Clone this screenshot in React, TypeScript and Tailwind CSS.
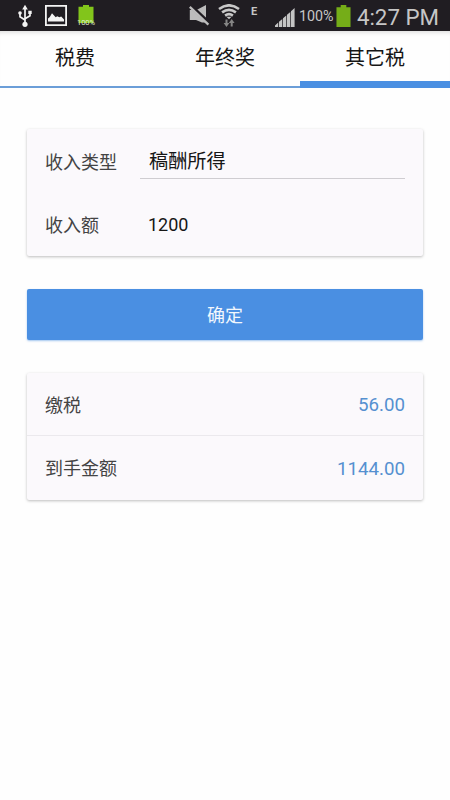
const tabs = ["税费", "年终奖", "其它税"];

const results = [
  { label: "缴税", value: "56.00" },
  { label: "到手金额", value: "1144.00" },
];

const cardClass =
  "rounded-[2px] bg-[#fbf9fc] shadow-[0_1px_3px_rgba(0,0,0,0.26)]";

function UsbIcon() {
  return (
    <svg width="14" height="24" viewBox="0 0 14 24" fill="none" stroke="#f4f4f4" strokeWidth="1.7">
      <path d="M7 4v16M2 9.5v3.3l5 3.2M12 8.5v3.3l-5 3" />
      <path d="M7 .8l2.8 4.6H4.2z" fill="#f4f4f4" stroke="none" />
      <circle cx="7" cy="20.3" r="2.6" fill="#f4f4f4" stroke="none" />
      <circle cx="2" cy="9" r="1.8" fill="#f4f4f4" stroke="none" />
      <path d="M10.3 6.7h3.4v3.4h-3.4z" fill="#f4f4f4" stroke="none" />
    </svg>
  );
}

function PictureIcon() {
  return (
    <svg width="22" height="21" viewBox="0 0 22 21">
      <path d="M.9.9h20.2v19.2H.9z" fill="none" stroke="#f4f4f4" strokeWidth="1.8" />
      <path d="M3 16.5v-3l1.8-1.6L7 8.3l3.7 4 1.5-1 2.2.9 1.8-.8 2.8 3v2.1z" fill="#f4f4f4" />
    </svg>
  );
}

function BatteryIcon({ className, color }: { className: string; color: string }) {
  return (
    <svg className={className} viewBox="0 0 16 22" preserveAspectRatio="none">
      <path d="M5 0h6v2.2h4.5V22H.5V2.2H5z" fill={color} />
    </svg>
  );
}

function MuteIcon() {
  return (
    <svg width="22" height="21" viewBox="0 0 22 21">
      <path d="M.8 5h6.7L17 0v17.5H13L7 15H.8z" fill="#bcbcbc" />
      <path d="M2.5 1.6L20.6 18.6" stroke="#201d22" strokeWidth="4" />
      <path d="M.8 1.8L19.4 19.6" stroke="#bcbcbc" strokeWidth="2.3" />
    </svg>
  );
}

function WifiIcon() {
  return (
    <svg width="22" height="24" viewBox="0 0 22 24" fill="none" stroke="#c8c8c8" strokeWidth="2.6">
      <path d="M1 5Q11-2.4 21 5M4.1 8.4q6.9-5 13.8 0M7.1 11.6q3.9-2.8 7.8 0" />
      <path d="M8.4 12.8h5.2L11 15.2z" fill="#c8c8c8" stroke="none" />
      <path d="M8.5 15.5v5M13.7 22.5v-5" stroke="#858585" strokeWidth="2" />
      <path d="M5.6 19h5.8l-2.9 4zM10.8 19h5.8l-2.9-4z" fill="#858585" stroke="none" />
    </svg>
  );
}

function SignalIcon() {
  return (
    <svg width="20" height="19" viewBox="0 0 20 19" fill="#c4c4c4">
      <path d="M0 19v-1.6l3.2-2.8V19zM4 19v-5.2L7.3 11v8zM8 19v-8.7l3.3-2.9V19zM12 19V6.8l3.3-2.9V19zM16 19V3.2L19.6 0v19z" />
    </svg>
  );
}

function StatusBar() {
  return (
    <header className="flex h-[31px] items-center bg-[#201d22] pl-[18px] pr-[11px] font-[Roboto] text-[#c6c6c6]">
      <UsbIcon />
      <div className="ml-[13px]">
        <PictureIcon />
      </div>
      <div className="relative ml-[11px] h-[21px] w-4">
        <BatteryIcon className="h-[18px] w-4" color="#82c51b" />
        <span className="absolute -left-0.5 top-[13px] w-5 text-center text-[7.5px] leading-[9px] text-[#e0efc9]">
          100%
        </span>
      </div>
      <div className="ml-[95px]">
        <MuteIcon />
      </div>
      <div className="ml-[7px]">
        <WifiIcon />
      </div>
      <span className="mb-[9px] ml-[11px] w-[7px] text-[11px] font-bold leading-none">E</span>
      <div className="ml-[17px] mt-[3px]">
        <SignalIcon />
      </div>
      <span className="ml-1 mt-[3px] w-[36px] whitespace-nowrap text-[14.3px]">100%</span>
      <BatteryIcon className="ml-[1px] h-[22px] w-[15px]" color="#75ad18" />
      <span className="ml-auto mt-[3px] whitespace-nowrap text-[22.3px] leading-none">4:27 PM</span>
    </header>
  );
}

export default function App() {
  return (
    <div className="h-[800px] w-[450px] overflow-hidden bg-[#fefefe] font-[Roboto,'Noto_Sans_CJK_SC',sans-serif]">
      <StatusBar />
      <nav className="grid h-[57px] grid-cols-3 shadow-[inset_0_5px_5px_-4px_rgba(0,0,0,0.16)]">
        {tabs.map((tab, index) => (
          <div
            key={tab}
            className={
              index === 2
                ? "h-[57px] border-b-[7px] border-[#4a8fe2] pt-0.5 text-center text-[20px] leading-[50px] text-[#161616]"
                : "h-[57px] border-b-2 border-[#6b9ed8] pt-0.5 text-center text-[20px] leading-[50px] text-[#161616]"
            }
          >
            {tab}
          </div>
        ))}
      </nav>

      <main className="px-[27px] pt-[41px]">
        <section className={`${cardClass} h-[127px] px-[18px]`}>
          <div className="flex h-[64px] items-center">
            <span className="w-[95px] pt-0.5 text-[18px] text-[#444]">收入类型</span>
            <div className="mb-[14px] h-[35px] flex-1 self-end border-b border-[#cfcdd1] pl-[9px] text-[19.2px] leading-[36px] text-[#161616]">
              稿酬所得
            </div>
          </div>
          <div className="flex h-[63px] items-center">
            <span className="w-[95px] pt-0.5 text-[18px] text-[#444]">收入额</span>
            <span className="pl-2 text-[18px] text-[#161616]">1200</span>
          </div>
        </section>

        <button className="mt-[33px] block h-[51px] w-full rounded-[2px] bg-[#4a8fe2] pt-0.5 text-[18px] text-[#f2f7fd] shadow-[0_1px_2px_rgba(74,143,226,0.5)]">
          确定
        </button>

        <section className={`${cardClass} mt-[33px] h-[127px] divide-y divide-[#ebe9ed]`}>
          {results.map((item) => (
            <div key={item.label} className="flex h-[63px] items-center justify-between px-[18px] pt-0.5">
              <span className="text-[18px] text-[#444]">{item.label}</span>
              <span className="pt-px text-[18.7px] text-[#5590d0]">{item.value}</span>
            </div>
          ))}
        </section>
      </main>
    </div>
  );
}
